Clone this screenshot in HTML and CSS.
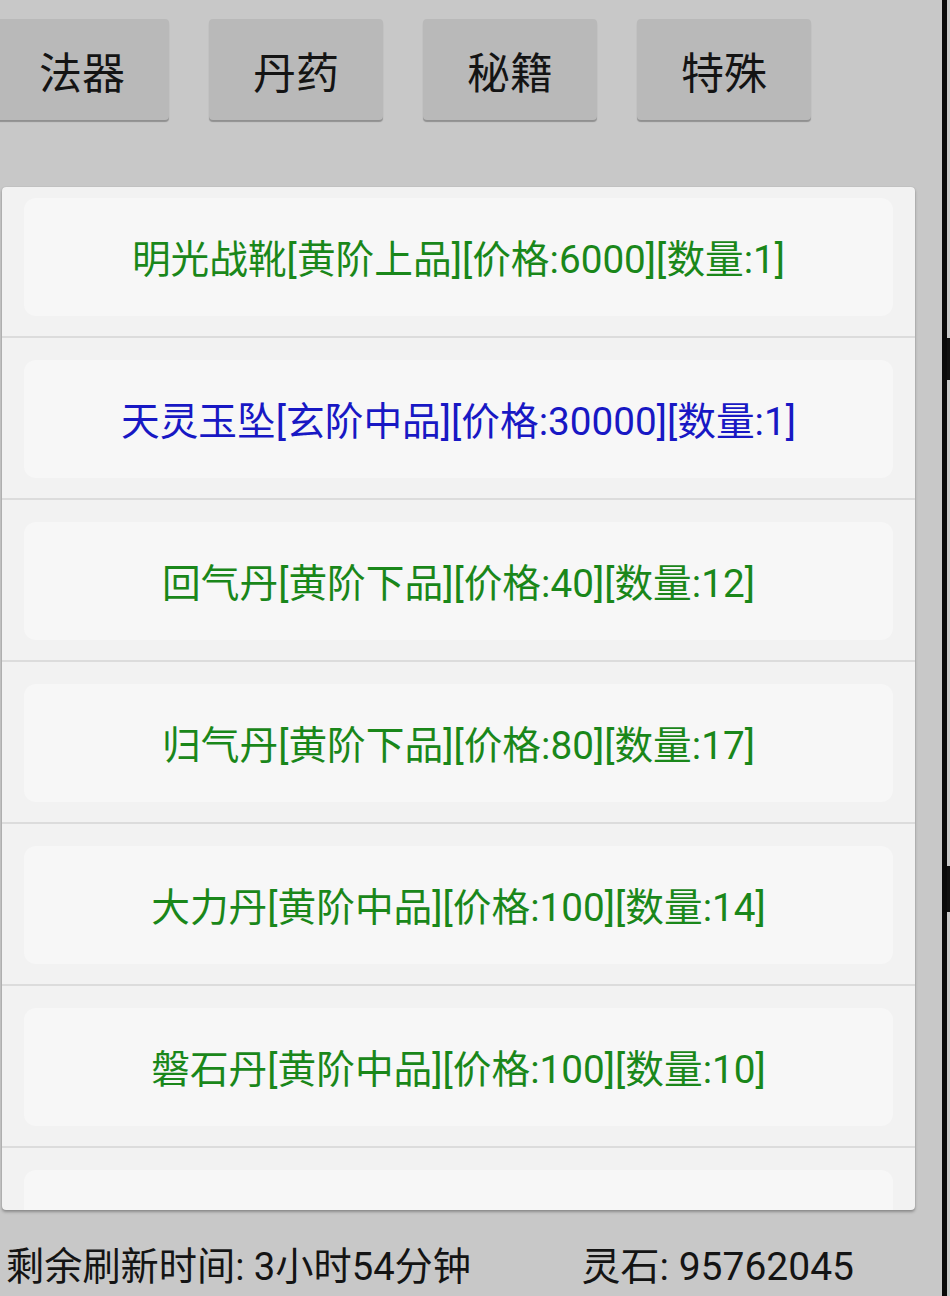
FILE: index.html
```html
<!DOCTYPE html>
<html lang="zh-CN">
<head>
<meta charset="utf-8">
<title>商店</title>
<link rel="stylesheet" href="styles.css">
</head>
<body>
<div class="screen">
  <div class="main">
    <div class="tabs">
      <div class="tab">法器</div>
      <div class="tab">丹药</div>
      <div class="tab">秘籍</div>
      <div class="tab">特殊</div>
    </div>
    <div class="list">
      <div class="scroll">
        <div class="row"><div class="item green">明光战靴[黄阶上品][价格:6000][数量:1]</div></div>
        <div class="row"><div class="item blue">天灵玉坠[玄阶中品][价格:30000][数量:1]</div></div>
        <div class="row"><div class="item green">回气丹[黄阶下品][价格:40][数量:12]</div></div>
        <div class="row"><div class="item green">归气丹[黄阶下品][价格:80][数量:17]</div></div>
        <div class="row"><div class="item green">大力丹[黄阶中品][价格:100][数量:14]</div></div>
        <div class="row"><div class="item green">磐石丹[黄阶中品][价格:100][数量:10]</div></div>
        <div class="row"><div class="item green"></div></div>
      </div>
    </div>
    <div class="footer">
      <span class="timer">剩余刷新时间: 3小时54分钟</span>
      <span class="stone">灵石: 95762045</span>
    </div>
  </div>
  <div class="edge"></div>
  <div class="strip">
    <div class="mark mark-a"></div>
    <div class="mark mark-b"></div>
  </div>
</div>
</body>
</html>
```
FILE: styles.css
```css
html, body {
  margin: 0;
  padding: 0;
}
body {
  width: 950px;
  height: 1296px;
  overflow: hidden;
  background: #c8c8c8;
  font-family: Roboto, "Noto Sans CJK SC", sans-serif;
}
.screen {
  display: flex;
  width: 950px;
  height: 1296px;
}
.main {
  width: 942px;
  flex: none;
  display: flex;
  flex-direction: column;
}
.tabs {
  display: flex;
  gap: 40px;
  margin-left: -5px;
  padding-top: 19px;
}
.tab {
  width: 174px;
  height: 101px;
  flex: none;
  background: #b9b9b9;
  border-radius: 4px;
  box-shadow: 0 2px 1px rgba(0, 0, 0, 0.28);
  display: flex;
  align-items: center;
  justify-content: center;
  font-size: 43px;
  color: #141414;
}
.list {
  margin-top: 67px;
  margin-left: 2px;
  width: 913px;
  height: 1023px;
  background: #f2f2f2;
  border-radius: 4px;
  box-shadow: 0 2px 3px rgba(0, 0, 0, 0.3), 0 0 1px rgba(0, 0, 0, 0.2);
  overflow: hidden;
}
.scroll {
  margin-top: -11px;
}
.row {
  padding: 22px 22px 20px;
  border-bottom: 2px solid #dcdcdc;
}
.item {
  height: 118px;
  padding-bottom: 3px;
  box-sizing: border-box;
  background: #f7f7f7;
  border-radius: 12px;
  display: flex;
  align-items: center;
  justify-content: center;
  font-size: 38.7px;
  white-space: nowrap;
}
.green {
  color: #1a871a;
}
.blue {
  color: #1818c4;
}
.footer {
  display: flex;
  align-items: center;
  margin-top: 35px;
  padding-left: 6px;
  padding-right: 88px;
  line-height: 44px;
  color: #141414;
  white-space: nowrap;
}
.timer {
  font-size: 38.2px;
}
.stone {
  margin-left: auto;
  font-size: 39px;
}
.edge {
  width: 5px;
  height: 1296px;
  flex: none;
  background: #0a0a0a;
}
.strip {
  width: 3px;
  flex: none;
  display: flex;
  flex-direction: column;
  align-items: flex-end;
}
.mark {
  width: 3px;
  background: #111;
}
.mark-a {
  margin-top: 338px;
  height: 42px;
}
.mark-b {
  margin-top: 486px;
  height: 46px;
}
```
